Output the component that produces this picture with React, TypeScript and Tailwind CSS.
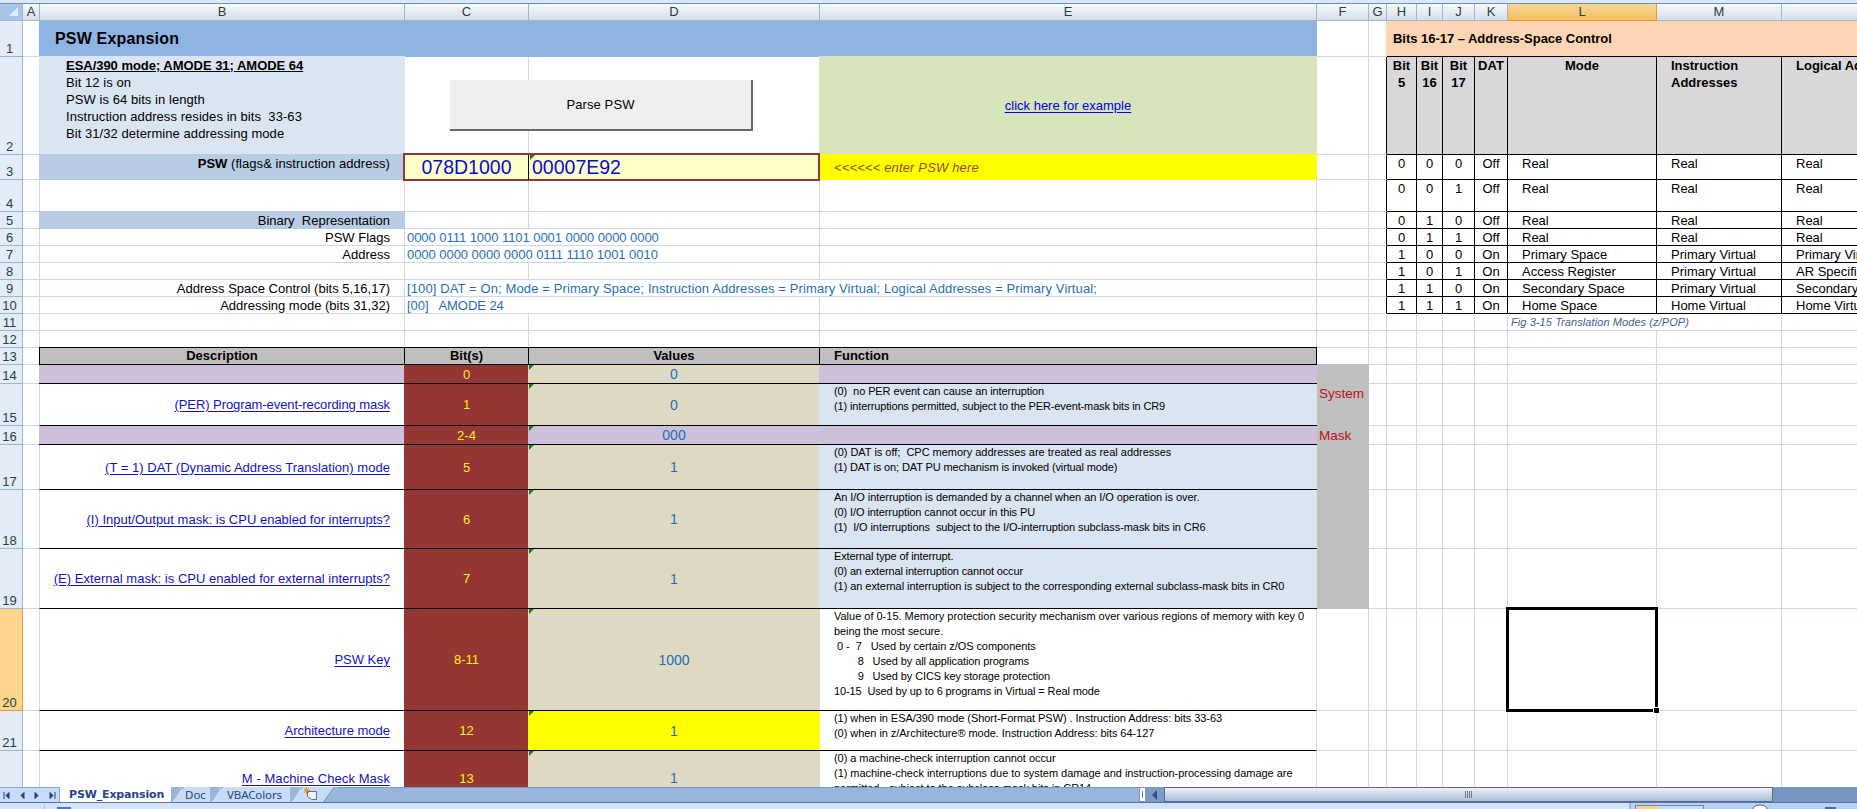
import type { ReactNode } from "react";

type CellProps = { className?: string; children?: ReactNode };

const GRID =
  "grid shrink-0 grid-rows-[minmax(0,1fr)] grid-cols-[23px_17px_365px_124px_291px_497px_52px_18px_30px_26px_32px_33px_149px_125px_76px]";

const plain = "border-r border-b border-[#d0d7e5]";

function Cell({ className = plain, children }: CellProps) {
  return <div className={"relative min-w-0 whitespace-pre " + className}>{children}</div>;
}

function RowHead({ n, active }: { n: string; active?: boolean }) {
  return (
    <div
      className={
        "flex items-end justify-center border-r border-b pr-[3px] text-[13px] leading-[15px] text-[#27413e] " +
        (active ? "border-[#f29536] bg-[#ffd58d]" : "border-[#9eb6ce] bg-[#e4ecf7]")
      }
    >
      {n}
    </div>
  );
}

function Flag() {
  return (
    <svg className="absolute left-px top-0" width="5" height="5">
      <path d="M0 0H5L0 5Z" fill="#1d7a1d" />
    </svg>
  );
}

const columns = ["A", "B", "C", "D", "E", "F", "G", "H", "I", "J", "K", "L", "M", ""];

function ColumnHeads() {
  return (
    <div className={GRID + " h-[17px]"}>
      <div className="flex items-end justify-end border-r border-b border-[#9eb6ce] bg-[#a9c4e9] p-1">
        <svg width="9" height="9">
          <path d="M9 0V9H0Z" fill="#e2ebf8" />
        </svg>
      </div>
      {columns.map((c, i) => (
        <div
          key={i}
          className={
            "flex items-center justify-center border-r border-b text-[13px] leading-4 text-[#27413e] " +
            (c === "L"
              ? "border-[#f29536] bg-linear-to-b from-[#f8d694] to-[#f1be60]"
              : "border-[#9eb6ce] bg-linear-to-b from-[#f8fafc] to-[#d6dee9]")
          }
        >
          {c}
        </div>
      ))}
    </div>
  );
}

const box = "border-r border-b border-black";
const boxHead = box + " bg-[#d8d8d8] font-bold text-center text-[13px] leading-[17px]";

type Mode = [string, string, string, string, string, string, string];

function ModeCells({ m }: { m: Mode }) {
  return (
    <>
      {m.map((v, i) => (
        <Cell
          key={i}
          className={box + " text-[13px] leading-[17px] " + (i < 4 ? "text-center" : "pl-[14px]")}
        >
          {v}
        </Cell>
      ))}
    </>
  );
}

function Blank({ n }: { n: number }) {
  return (
    <>
      {Array.from({ length: n }, (_, i) => (
        <Cell key={i} />
      ))}
    </>
  );
}

const modes: Record<string, Mode> = {
  "3": ["0", "0", "0", "Off", "Real", "Real", "Real"],
  "4": ["0", "0", "1", "Off", "Real", "Real", "Real"],
  "5": ["0", "1", "0", "Off", "Real", "Real", "Real"],
  "6": ["0", "1", "1", "Off", "Real", "Real", "Real"],
  "7": ["1", "0", "0", "On", "Primary Space", "Primary Virtual", "Primary Virtual"],
  "8": ["1", "0", "1", "On", "Access Register", "Primary Virtual", "AR Specified"],
  "9": ["1", "1", "0", "On", "Secondary Space", "Primary Virtual", "Secondary Virtual"],
  "10": ["1", "1", "1", "On", "Home Space", "Home Virtual", "Home Virtual"],
};

const gBlack = "border-b border-[#d0d7e5] border-r border-r-black";

function LabelRow({ n, label, value, fill }: { n: string; label?: string; value?: string; fill?: boolean }) {
  const wide = value !== undefined && value.length > 60;
  return (
    <div className={GRID + " h-[17px]"}>
      <RowHead n={n} />
      <Cell />
      <Cell
        className={
          (fill ? "-ml-px -mt-px bg-[#b8cce4] pr-[15px] pt-px " : plain + " pr-[14px] ") +
          "text-right text-[13px] leading-[17px]"
        }
      >
        {label}
      </Cell>
      {value ? (
        <>
          <Cell
            className={
              "z-10 border-b border-[#d0d7e5] pl-[2px] text-[13px] leading-[17px] text-[#1f6fb8] " +
              (wide ? "tracking-[0.115px]" : "tracking-[-0.05px]")
            }
          >
            {value}
          </Cell>
          <Cell className={wide ? "border-b border-[#d0d7e5]" : plain} />
          <Cell />
        </>
      ) : (
        <Blank n={3} />
      )}
      <Cell />
      <Cell className={gBlack} />
      <ModeCells m={modes[n]} />
    </div>
  );
}

type Detail = {
  n: string;
  h: string;
  desc?: string;
  descTrack?: string;
  bits: string;
  val: string;
  lines?: [string, string][];
  look: "lilac" | "pale" | "white";
  valBg: string;
  side?: string;
};

const details: Detail[] = [
  { n: "14", h: "h-[19px]", bits: "0", val: "0", look: "lilac", valBg: "bg-[#ddd9c3]", side: "" },
  {
    n: "15", h: "h-[42px]", desc: "(PER) Program-event-recording mask", descTrack: "tracking-[-0.08px]",
    bits: "1", val: "0", look: "pale", valBg: "bg-[#ddd9c3]", side: "System",
    lines: [
      ["(0)  no PER event can cause an interruption", "tracking-[-0.09px]"],
      ["(1) interruptions permitted, subject to the PER-event-mask bits in CR9", "tracking-[-0.135px]"],
    ],
  },
  { n: "16", h: "h-[19px]", bits: "2-4", val: "000", look: "lilac", valBg: "bg-[#ccc0da]", side: "Mask" },
  {
    n: "17", h: "h-[45px]", desc: "(T = 1) DAT (Dynamic Address Translation) mode", descTrack: "tracking-[0.03px]",
    bits: "5", val: "1", look: "pale", valBg: "bg-[#ddd9c3]", side: "",
    lines: [
      ["(0) DAT is off;  CPC memory addresses are treated as real addresses", "tracking-[-0.02px]"],
      ["(1) DAT is on; DAT PU mechanism is invoked (virtual mode)", "tracking-[-0.13px]"],
    ],
  },
  {
    n: "18", h: "h-[59px]", desc: "(I) Input/Output mask: is CPU enabled for interrupts?", bits: "6", val: "1",
    look: "pale", valBg: "bg-[#ddd9c3]", side: "",
    lines: [
      ["An I/O interruption is demanded by a channel when an I/O operation is over.", "tracking-[-0.06px]"],
      ["(0) I/O interruption cannot occur in this PU", "tracking-[-0.1px]"],
      ["(1)  I/O interruptions  subject to the I/O-interruption subclass-mask bits in CR6", "tracking-[-0.085px]"],
    ],
  },
  {
    n: "19", h: "h-[60px]", desc: "(E) External mask: is CPU enabled for external interrupts?",
    descTrack: "tracking-[0.03px]", bits: "7", val: "1", look: "pale", valBg: "bg-[#ddd9c3]", side: "",
    lines: [
      ["External type of interrupt.", "tracking-[-0.13px]"],
      ["(0) an external interruption cannot occur", "tracking-[-0.15px]"],
      ["(1) an external interruption is subject to the corresponding external subclass-mask bits in CR0", "tracking-[-0.06px]"],
    ],
  },
  {
    n: "20", h: "h-[102px]", desc: "PSW Key", bits: "8-11", val: "1000", look: "white", valBg: "bg-[#ddd9c3]",
    lines: [
      ["Value of 0-15. Memory protection security mechanism over various regions of memory with key 0", "tracking-[-0.01px]"],
      ["being the most secure.", "tracking-[-0.1px]"],
      [" 0 -  7   Used by certain z/OS components", "tracking-[-0.06px]"],
      ["        8   Used by all application programs", "tracking-[-0.1px]"],
      ["        9   Used by CICS key storage protection", "tracking-[-0.1px]"],
      ["10-15  Used by up to 6 programs in Virtual = Real mode", "tracking-[-0.12px]"],
    ],
  },
  {
    n: "21", h: "h-[40px]", desc: "Architecture mode", bits: "12", val: "1", look: "white", valBg: "bg-[#ffff00]",
    lines: [
      ["(1) when in ESA/390 mode (Short-Format PSW) . Instruction Address: bits 33-63", "tracking-[-0.05px]"],
      ["(0) when in z/Architecture® mode. Instruction Address: bits 64-127", "tracking-[-0.05px]"],
    ],
  },
  {
    n: "22", h: "h-[55px]", desc: "M - Machine Check Mask", descTrack: "tracking-[0.07px]", bits: "13", val: "1",
    look: "white", valBg: "bg-[#ddd9c3]",
    lines: [
      ["(0) a machine-check interruption cannot occur", "tracking-[-0.05px]"],
      ["(1) machine-check interruptions due to system damage and instruction-processing damage are", "tracking-[-0.035px]"],
      ["permitted - subject to the subclass-mask bits in CR14", "tracking-[-0.05px]"],
    ],
  },
];

function DetailRow({ d }: { d: Detail }) {
  const active = d.n === "20";
  const descBg = d.look === "lilac" ? "bg-[#ccc0da]" : "border-l border-l-[#d0d7e5]";
  const funcBg =
    d.look === "lilac" ? "bg-[#ccc0da]" : d.look === "pale" ? "bg-[#dbe5f1]" : "border-r border-r-[#d0d7e5]";
  return (
    <div className={GRID + " " + d.h}>
      <RowHead n={d.n} active={active} />
      <Cell />
      <Cell
        className={
          "-ml-px flex items-center justify-end border-b border-black pr-[15px] text-[13px] leading-[15px] " + descBg
        }
      >
        {d.desc && (
          <a className={"text-[#1212c8] underline underline-offset-2 " + (d.descTrack ?? "")}>{d.desc}</a>
        )}
      </Cell>
      <Cell className="-ml-px flex items-center justify-center border-b border-black bg-[#943634] text-[13px] leading-[15px] text-[#ffee20]">
        {d.bits}
      </Cell>
      <Cell
        className={
          "-ml-px flex items-center justify-center border-b border-black text-[14px] leading-4 text-[#1f6fb8] " + d.valBg
        }
      >
        <Flag />
        {d.val}
      </Cell>
      <Cell className={"-ml-px border-b border-black pl-[15px] text-[11px] leading-[15px] " + funcBg}>
        {d.lines?.map(([t, track]) => (
          <div key={t} className={track}>
            {t}
          </div>
        ))}
      </Cell>
      <Cell
        className={
          d.side === undefined ? plain : "-mt-px bg-[#bfbfbf] pl-[2px] pt-[2px] text-[13.5px] leading-[17px] text-[#c0101c]"
        }
      >
        {d.side}
      </Cell>
      {active ? (
        <>
          <Blank n={5} />
          <Cell className={plain + " z-10"}>
            <div className="absolute -bottom-[2px] -left-[2px] -right-[2px] -top-[2px] border-[3px] border-black" />
            <div className="absolute -bottom-[3px] -right-[3px] size-[6px] border-l border-t border-white bg-black" />
          </Cell>
          <Blank n={2} />
        </>
      ) : (
        <Blank n={8} />
      )}
    </div>
  );
}

const head13 = "-mt-px border-y border-r border-black bg-[#bfbfbf] text-[13px] font-bold leading-[16px] ";

function Sheet() {
  return (
    <div className="flex h-[766px] flex-col overflow-hidden">
      <div className={GRID + " h-[36px]"}>
        <RowHead n="1" />
        <Cell />
        <Cell className="col-span-4 -ml-px flex items-center bg-[#8db4e3] pl-[16px] text-[16px] font-bold tracking-[0.18px]">
          PSW Expansion
        </Cell>
        <Blank n={2} />
        <Cell className="col-span-7 -ml-px flex items-center bg-[#fcd5b4] pl-[7px] text-[13px] font-bold tracking-[-0.03px]">
          Bits 16-17 – Address-Space Control
        </Cell>
      </div>

      <div className={GRID + " h-[98px]"}>
        <RowHead n="2" />
        <Cell />
        <Cell className="-ml-px -mt-px bg-[#dbe5f1] pl-[27px] pt-px text-[13px] leading-[17px] tracking-[0.06px]">
          <div className="font-bold tracking-[-0.03px] underline">ESA/390 mode; AMODE 31; AMODE 64</div>
          {"Bit 12 is on\nPSW is 64 bits in length\nInstruction address resides in bits  33-63\nBit 31/32 determine addressing mode"}
        </Cell>
        <Cell>
          <button className="absolute left-[45px] top-[23px] z-10 h-[51px] w-[303px] border-b-2 border-r-2 border-[#696969] bg-[#efefef] text-[13px] tracking-[0.1px]">
            Parse PSW
          </button>
        </Cell>
        <Cell />
        <Cell className="-ml-px -mt-px flex items-center justify-center bg-[#d7e4bc] text-[13px]">
          <a className="text-[#0000e0] underline underline-offset-2">click here for example</a>
        </Cell>
        <Cell />
        <Cell className={gBlack} />
        {["Bit\n5", "Bit\n16", "Bit\n17", "DAT", "Mode"].map((t) => (
          <Cell key={t} className={boxHead + " -mt-px border-t"}>
            {t}
          </Cell>
        ))}
        <Cell className={boxHead + " -mt-px border-t pl-[14px] text-left!"}>{"Instruction\nAddresses"}</Cell>
        <Cell className={boxHead + " -mt-px border-t pl-[14px] text-left!"}>Logical Addresses</Cell>
      </div>

      <div className={GRID + " h-[25px]"}>
        <RowHead n="3" />
        <Cell />
        <Cell className="-ml-px -mt-px bg-[#b8cce4] pr-[15px] pt-px text-right text-[13px] leading-[17px] tracking-[0.05px]">
          <b>PSW</b> (flags&amp; instruction address)
        </Cell>
        <div className="z-10 col-span-2 -mb-px -ml-[2px] -mt-[2px] grid grid-cols-[124px_1fr] border-2 border-[#8b3a38] bg-[#ffffcc] text-[19.5px] leading-[25px] text-[#0a0ad0]">
          <div className="border-r border-black text-center">078D1000</div>
          <div className="relative pl-[3px]">
            <Flag />
            00007E92
          </div>
        </div>
        <Cell className="-mt-px flex items-center bg-[#ffff00] pl-[14px] pt-px text-[13px] italic tracking-[0.15px] text-[#984807]">
          {"<<<<<< enter PSW here"}
        </Cell>
        <Cell />
        <Cell className={gBlack} />
        <ModeCells m={modes["3"]} />
      </div>

      <div className={GRID + " h-[32px]"}>
        <RowHead n="4" />
        <Blank n={6} />
        <Cell className={gBlack} />
        <ModeCells m={modes["4"]} />
      </div>
      <LabelRow n="5" label="Binary  Representation" fill />
      <LabelRow n="6" label="PSW Flags" value="0000 0111 1000 1101 0001 0000 0000 0000" />
      <LabelRow n="7" label="Address" value="0000 0000 0000 0000 0111 1110 1001 0010" />
      <LabelRow n="8" />
      <LabelRow
        n="9"
        label="Address Space Control (bits 5,16,17)"
        value="[100] DAT = On; Mode = Primary Space; Instruction Addresses = Primary Virtual; Logical Addresses = Primary Virtual;"
      />
      <LabelRow n="10" label="Addressing mode (bits 31,32)" value="[00]   AMODE 24" />

      <div className={GRID + " h-[17px]"}>
        <RowHead n="11" />
        <Blank n={11} />
        <Cell className="border-b border-[#d0d7e5] pl-[3px] text-[11px] italic leading-4 tracking-[0.08px] text-[#44618c]">
          Fig 3-15 Translation Modes (z/POP)
        </Cell>
        <Blank n={2} />
      </div>
      <div className={GRID + " h-[17px]"}>
        <RowHead n="12" />
        <Blank n={14} />
      </div>
      <div className={GRID + " h-[17px]"}>
        <RowHead n="13" />
        <Cell />
        <Cell className={head13 + "-ml-px border-l text-center"}>Description</Cell>
        <Cell className={head13 + "text-center"}>Bit(s)</Cell>
        <Cell className={head13 + "text-center"}>Values</Cell>
        <Cell className={head13 + "pl-[14px]"}>Function</Cell>
        <Blank n={9} />
      </div>
      {details.map((d) => (
        <DetailRow key={d.n} d={d} />
      ))}
    </div>
  );
}

function TabEdge() {
  return (
    <svg width="14" height="15" className="shrink-0">
      <path d="M0 15L10 0H14V15Z" fill="#c9dcf5" />
      <path d="M0 14.5C5 13 6 2 13 0.5" fill="none" stroke="#7d97c0" />
    </svg>
  );
}

function BottomBar() {
  return (
    <div className="flex h-[16px] border-b border-[#5673a8] bg-[#9ab5dc] font-['Noto_Sans',sans-serif] text-[11.5px] leading-[15px] text-[#27458a]">
      <div className="flex w-[60px] shrink-0 items-center justify-around border-r border-t border-[#8aa6d0] bg-[#c9dcf5]">
        {["M1 1V8M6 1.500L3 4.500L6 7.500Z", "M6 1.500L3 4.500L6 7.500Z", "M3 1.500L6 4.500L3 7.500Z", "M8 1V8M3 1.500L6 4.500L3 7.500Z"].map((d) => (
          <svg key={d} width="9" height="9">
            <path d={d} fill="#1f3f86" stroke="#1f3f86" strokeWidth="1" />
          </svg>
        ))}
      </div>
      <div className="w-[111px] shrink-0 bg-white pl-[9px] font-['DejaVu_Sans',sans-serif] text-[11px] font-bold tracking-[-0.15px]">
        PSW_Expansion
      </div>
      <TabEdge />
      <div className="w-[25px] shrink-0 bg-[#c9dcf5]">Doc</div>
      <TabEdge />
      <div className="w-[66px] shrink-0 bg-[#c9dcf5] pl-[3px] tracking-[-0.1px]">VBAColors</div>
      <TabEdge />
      <svg width="34" height="15" className="shrink-0">
        <path d="M0 0H30L19 15H0Z" fill="#c9dcf5" />
        <path d="M30.500 0L19.500 15" stroke="#7d97c0" />
        <path d="M3.500 4.500H12.500V12.500H7.500L3.500 9.500Z" fill="#eef3fb" stroke="#5d6f94" />
        <path d="M2.500 0V7M-1 3.500H6M0 1L5 6M5 1L0 6" stroke="#e8962c" />
      </svg>
      <div className="flex-1 border-t border-[#7d97c0]" />
      <div className="flex w-[7px] items-center justify-center border border-[#7d97c0] bg-white">
        <div className="h-[7px] w-px bg-[#5d7fb4]" />
      </div>
      <div className="flex w-[18px] items-center justify-center bg-[#7b9ac4]">
        <svg width="6" height="10">
          <path d="M5 0V10L0 5Z" fill="#2f4f85" />
        </svg>
      </div>
      <div className="flex w-[609px] items-center justify-center gap-px border border-[#5b6a90] bg-linear-to-b from-[#eef1f6] to-[#a9bdd3]">
        {[0, 1, 2, 3].map((i) => (
          <div key={i} className="h-[7px] w-px bg-[#6d7788]" />
        ))}
      </div>
      <div className="w-[84px] bg-[#7797c1]" />
    </div>
  );
}

function StatusBar() {
  return (
    <div className="flex h-[6px] overflow-hidden bg-[#d3e3f9]">
      <div className="mt-[2px] w-[45px] border-r border-[#a9bfdf]" />
      <div className="ml-[12px] mt-[4px] h-[2px] w-[14px] bg-[#4d74c4]" />
      <div className="flex-1" />
      <div className="flex w-[228px] border-l-2 border-[#9db8dd] bg-[#b7d0f3]">
        <div className="ml-[4px] mt-[2px] flex h-[8px] w-[69px] border border-[#6d86b4] bg-[#c8dcf7]">
          <div className="w-[23px] bg-[#f7cf94]" />
        </div>
        <svg width="100" height="6" className="ml-[32px]">
          <ellipse cx="24" cy="6" rx="7" ry="4" fill="#fff" stroke="#4b5f8e" />
          <rect x="89" y="4" width="11" height="2" fill="#3d6ea8" />
        </svg>
      </div>
    </div>
  );
}

export default function App() {
  return (
    <div className="h-[809px] w-[1857px] overflow-hidden bg-white font-['Liberation_Sans',Arial,sans-serif] text-black">
      <div className="h-[4px] border-b border-[#6f8fb5] bg-[#dce8f7]" />
      <ColumnHeads />
      <Sheet />
      <BottomBar />
      <StatusBar />
    </div>
  );
}
